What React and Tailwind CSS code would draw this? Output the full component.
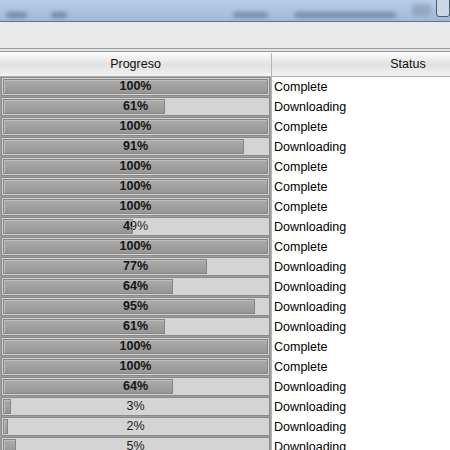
import React from 'react'

const rows = [100, 61, 100, 91, 100, 100, 100, 49, 100, 77, 64, 95, 61, 100, 100, 64, 3, 2, 5]

const font = { fontFamily: '"Liberation Sans", Arial, sans-serif' }

function Bar({ pct }) {
  return (
    <div className="relative h-[19px] border border-[#8a8a8a] bg-[#d4d4d4]">
      <div className="flex h-full items-center justify-center text-[12.5px] text-[#1c1c1c]">
        {pct}%
      </div>
      <div
        className="absolute top-[1px] bottom-[1px] left-[1px] overflow-hidden border border-[#858585] bg-gradient-to-b from-[#acacac] to-[#969696] shadow-[inset_1px_1px_0_#bdbdbd]"
        style={{ width: `calc((100% - 2px) * ${pct / 100})` }}
      >
        <div className="absolute top-[-2px] bottom-[-2px] left-[-2px] flex w-[267px] items-center justify-center text-[12.5px] font-bold text-[#151515]">
          {pct}%
        </div>
      </div>
    </div>
  )
}

function Header({ children }) {
  return (
    <div className="flex h-[24px] items-center justify-center border-b border-[#b0b0b0] bg-gradient-to-b from-[#fafafa] via-[#e2e2e2] to-[#f2f2f2] text-[12.5px] text-[#111]">
      {children}
    </div>
  )
}

export default function App() {
  return (
    <div className="h-[450px] w-[450px] overflow-hidden bg-white" style={font}>
      {/* blurred window strip behind */}
      <div className="flex h-[22px] items-end overflow-hidden border-b border-[#5f7590] bg-gradient-to-b from-[#b9cee6] to-[#9fb9d7] pb-[3px]">
        <div className="ml-[6px] h-[6px] w-[22px] rounded bg-[#55677e] opacity-60 blur-[2px]" />
        <div className="ml-[24px] h-[6px] w-[16px] rounded bg-[#55677e] opacity-60 blur-[2px]" />
        <div className="ml-[166px] h-[6px] w-[36px] rounded bg-[#4c5f78] opacity-50 blur-[2px]" />
        <div className="ml-[26px] h-[6px] w-[104px] rounded bg-[#4c5f78] opacity-50 blur-[2px]" />
        <div className="ml-[16px] mb-[2px] h-[12px] w-[20px] rounded bg-[#6d7f95] opacity-40 blur-[2px]" />
        <div className="mb-[1px] ml-[5px] h-[24px] w-[14px] rounded-[3px] border border-[#4e5a68] bg-[#c9d7e6]" />
      </div>
      <div className="h-[26px] bg-[#e9e9e9]" />
      <div className="h-[4px] border-y border-[#9a9a9a] bg-[#e4e4e4]" />

      <div className="flex w-[544px] pt-[1px]">
        <div className="w-[272px] border-r border-[#b5b5b5] bg-[#9d9d9d]">
          <Header>Progreso</Header>
          {rows.map((p, i) => (
            <div key={i} className="h-[20px] px-[1px] pb-[1px]">
              <Bar pct={p} />
            </div>
          ))}
        </div>
        <div className="flex-1 bg-white">
          <Header>Status</Header>
          {rows.map((p, i) => (
            <div key={i} className="flex h-[20px] items-center pl-[2px] text-[12.5px] text-black">
              {p === 100 ? 'Complete' : 'Downloading'}
            </div>
          ))}
        </div>
      </div>
    </div>
  )
}
